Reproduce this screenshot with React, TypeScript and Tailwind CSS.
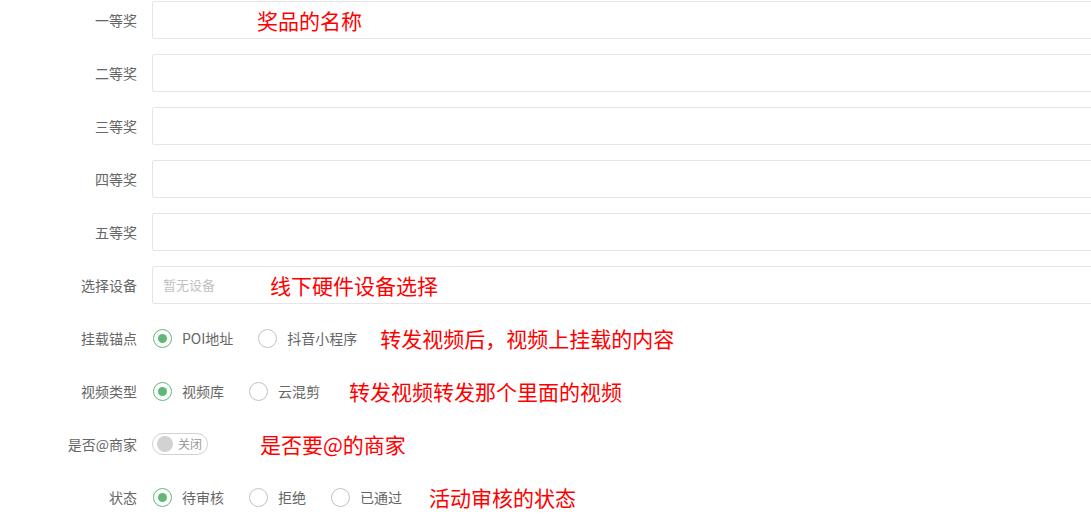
import React from 'react';

const font = { fontFamily: '"Noto Sans CJK SC", "Liberation Sans", sans-serif' };

function Label({ children }: { children: React.ReactNode }) {
  return <div className="w-[137px] shrink-0 text-right text-[14px] text-[#666]">{children}</div>;
}

function Note({ children, className = '' }: { children: React.ReactNode; className?: string }) {
  return <span className={`text-[21px] leading-none text-[#ff0000] whitespace-nowrap ${className}`}>{children}</span>;
}

function Radio({ label, checked = false }: { label: string; checked?: boolean }) {
  return (
    <label className="flex items-center mr-[25px]">
      <span className={`w-[19px] h-[19px] rounded-full border-[1.5px] flex items-center justify-center ${checked ? 'border-[#5FB878]' : 'border-[#c2c2c2]'}`}>
        {checked && <span className="w-[9px] h-[9px] rounded-full bg-[#5FB878]" />}
      </span>
      <span className="ml-[10px] text-[14px] text-[#666] whitespace-nowrap">{label}</span>
    </label>
  );
}

function Row({ label, children }: { label: string; children: React.ReactNode }) {
  return (
    <div className="flex items-center h-[38px] mb-[15px]">
      <Label>{label}</Label>
      <div className="ml-[15px] flex items-center">{children}</div>
    </div>
  );
}

function Input({ placeholder, note, notePad }: { placeholder?: string; note?: string; notePad: string }) {
  return (
    <div className="h-[38px] w-[960px] border border-[#e6e6e6] rounded-[2px] bg-white flex items-center">
      {placeholder && <span className="pl-[10px] text-[13px] text-[#c2c2c2] w-[117px]">{placeholder}</span>}
      {note && <Note className={notePad}>{note}</Note>}
    </div>
  );
}

export default function App() {
  const prizes = ['一等奖', '二等奖', '三等奖', '四等奖', '五等奖'];
  return (
    <div className="w-[1091px] h-[515px] overflow-hidden bg-white pt-px" style={font}>
      {prizes.map((p, i) => (
        <Row key={p} label={p}>
          <Input note={i === 0 ? '奖品的名称' : undefined} notePad="pl-[104px]" />
        </Row>
      ))}
      <Row label="选择设备">
        <Input placeholder="暂无设备" note="线下硬件设备选择" notePad="" />
      </Row>
      <Row label="挂载锚点">
        <div className="ml-px flex items-center">
          <Radio label="POI地址" checked />
          <Radio label="抖音小程序" />
          <Note className="-ml-[2px]">转发视频后，视频上挂载的内容</Note>
        </div>
      </Row>
      <Row label="视频类型">
        <div className="ml-px flex items-center">
          <Radio label="视频库" checked />
          <Radio label="云混剪" />
          <Note className="ml-[4px]">转发视频转发那个里面的视频</Note>
        </div>
      </Row>
      <Row label="是否@商家">
        <div className="flex items-center">
          <div className="h-[22px] w-[56px] rounded-full border border-[#d2d2d2] flex items-center pl-[4px]">
            <span className="w-[16px] h-[16px] rounded-full bg-[#d2d2d2]" />
            <span className="ml-[5px] text-[12px] text-[#999]">关闭</span>
          </div>
          <Note className="ml-[52px]">是否要@的商家</Note>
        </div>
      </Row>
      <Row label="状态">
        <div className="ml-px flex items-center">
          <Radio label="待审核" checked />
          <Radio label="拒绝" />
          <Radio label="已通过" />
          <Note className="ml-[2px]">活动审核的状态</Note>
        </div>
      </Row>
    </div>
  );
}
